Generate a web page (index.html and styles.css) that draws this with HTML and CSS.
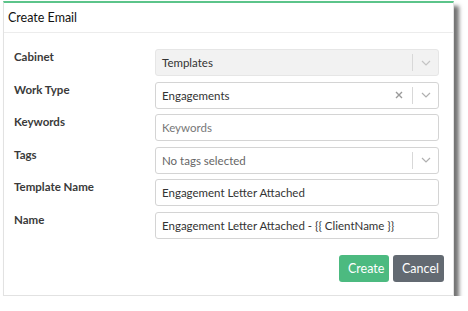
FILE: index.html
```html
<!DOCTYPE html>
<html lang="en">
<head>
  <meta charset="UTF-8">
  <title>Create Email</title>
  <link rel="stylesheet" href="styles.css">
</head>
<body>

  <div class="dialog">
    <div class="dialog-header">Create Email</div>

    <form class="dialog-body">
      <label class="field-label">Cabinet</label>
      <div class="select disabled">
        <span class="select-value">Templates</span>
        <span class="select-sep"></span>
        <span class="select-arrow">
          <svg width="10" height="6" viewBox="0 0 10 6"><path d="M1 1 L5 5 L9 1" fill="none" stroke="#c4c4c4" stroke-width="1.2"/></svg>
        </span>
      </div>

      <label class="field-label">Work Type</label>
      <div class="select">
        <span class="select-value">Engagements</span>
        <span class="select-clear">
          <svg width="8" height="8" viewBox="0 0 8 8"><path d="M1 1 L7 7 M7 1 L1 7" fill="none" stroke="#9a9a9a" stroke-width="1.4"/></svg>
        </span>
        <span class="select-sep"></span>
        <span class="select-arrow">
          <svg width="10" height="6" viewBox="0 0 10 6"><path d="M1 1 L5 5 L9 1" fill="none" stroke="#b0b0b0" stroke-width="1.2"/></svg>
        </span>
      </div>

      <label class="field-label">Keywords</label>
      <input class="text-input" type="text" placeholder="Keywords">

      <label class="field-label">Tags</label>
      <div class="select">
        <span class="select-value placeholder">No tags selected</span>
        <span class="select-sep"></span>
        <span class="select-arrow">
          <svg width="10" height="6" viewBox="0 0 10 6"><path d="M1 1 L5 5 L9 1" fill="none" stroke="#b0b0b0" stroke-width="1.2"/></svg>
        </span>
      </div>

      <label class="field-label">Template Name</label>
      <input class="text-input" type="text" value="Engagement Letter Attached">

      <label class="field-label">Name</label>
      <input class="text-input" type="text" value="Engagement Letter Attached - {{ ClientName }}">
    </form>

    <div class="dialog-footer">
      <button type="button" class="btn btn-create">Create</button>
      <button type="button" class="btn btn-cancel">Cancel</button>
    </div>
  </div>

</body>
</html>
```

FILE: styles.css
```css
body {
  margin: 0;
  padding: 0;
  background-color: #fff;
  font-family: Lato, "Open Sans", sans-serif;
  color: #333;
}

.dialog {
  margin: 1px 0 0 3px;
  width: 449px;
  height: 292px;
  background-color: #fff;
  border: 1px solid #e2e2e2;
  border-top: 2px solid #5cc48a;
  box-shadow: 5px 5px 4px rgba(0, 0, 0, 0.55);
  display: flex;
  flex-direction: column;
}

.dialog-header {
  height: 29px;
  line-height: 29px;
  padding-left: 4px;
  font-size: 12.5px;
  color: #111;
  border-bottom: 1px solid #ececec;
}

.dialog-body {
  display: grid;
  grid-template-columns: 141px 1fr;
  row-gap: 5.6px;
  padding: 16px 14px 0 10px;
  margin: 0;
}

.field-label {
  font-size: 11.5px;
  font-weight: bold;
  color: #3a3a3a;
  padding-top: 1px;
}

.text-input,
.select {
  box-sizing: border-box;
  height: 27px;
  border: 1px solid #d4d4d4;
  border-radius: 3px;
  font-family: inherit;
  font-size: 11.5px;
  color: #333;
  background-color: #fff;
}

.text-input {
  padding: 0 6px;
  width: 100%;
}

.text-input::placeholder {
  color: #777;
}

.select {
  display: flex;
  align-items: center;
  padding-left: 6px;
}

.select.disabled {
  background-color: #f2f2f2;
  border-color: #e6e6e6;
}

.select-value {
  flex: 1;
}

.select-value.placeholder {
  color: #666;
}

.select-clear {
  display: flex;
  align-items: center;
  padding-right: 9px;
}

.select-sep {
  width: 1px;
  height: 17px;
  background-color: #d8d8d8;
}

.select-arrow {
  display: flex;
  align-items: center;
  justify-content: center;
  width: 25px;
}

.dialog-footer {
  display: flex;
  justify-content: flex-end;
  gap: 4px;
  padding: 16px 9px 0 0;
}

.btn {
  height: 27px;
  padding: 0 9px;
  border: none;
  border-radius: 3px;
  font-family: inherit;
  font-size: 12.5px;
  color: #fff;
  cursor: pointer;
}

.btn-create {
  width: 50px;
  background-color: #4cba80;
}

.btn-cancel {
  width: 51px;
  background-color: #636a72;
}
```
